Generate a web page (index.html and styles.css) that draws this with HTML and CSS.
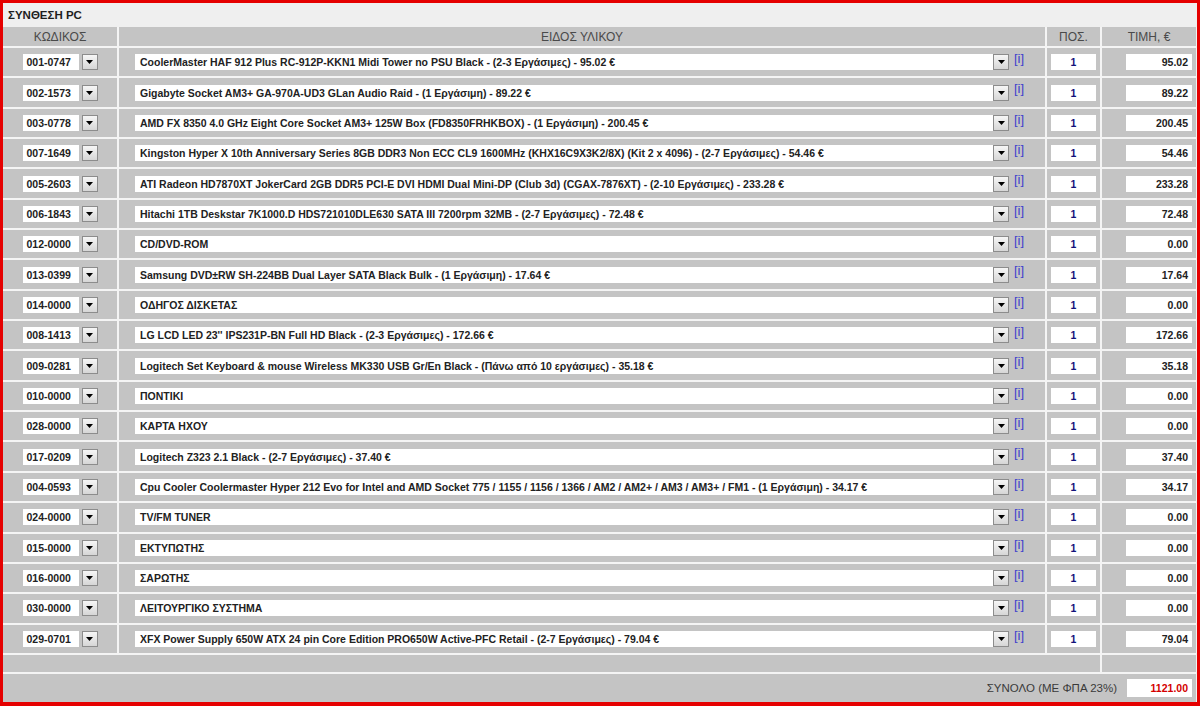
FILE: index.html
```html
<!DOCTYPE html>
<html lang="el">
<head>
    <meta charset="UTF-8">
    <meta name="viewport" content="width=device-width, initial-scale=1.0">
    <title>Σύνθεση PC</title>
    <link rel="stylesheet" href="styles.css">
</head>
<body>
    <div class="page">
        <div class="title">ΣΥΝΘΕΣΗ PC</div>
        <div class="parts" id="parts">
            <div class="head">ΚΩΔΙΚΟΣ</div>
            <div class="head">ΕΙΔΟΣ ΥΛΙΚΟΥ</div>
            <div class="head">ΠΟΣ.</div>
            <div class="head">ΤΙΜΗ, €</div>
        </div>
    </div>

    <script>
        const parts = [
            ["001-0747", "CoolerMaster HAF 912 Plus RC-912P-KKN1 Midi Tower no PSU Black - (2-3 Εργάσιμες) - 95.02 €", "95.02"],
            ["002-1573", "Gigabyte Socket AM3+ GA-970A-UD3 GLan Audio Raid - (1 Εργάσιμη) - 89.22 €", "89.22"],
            ["003-0778", "AMD FX 8350 4.0 GHz Eight Core Socket AM3+ 125W Box (FD8350FRHKBOX) - (1 Εργάσιμη) - 200.45 €", "200.45"],
            ["007-1649", "Kingston Hyper X 10th Anniversary Series 8GB DDR3 Non ECC CL9 1600MHz (KHX16C9X3K2/8X) (Kit 2 x 4096) - (2-7 Εργάσιμες) - 54.46 €", "54.46"],
            ["005-2603", "ATI Radeon HD7870XT JokerCard 2GB DDR5 PCI-E DVI HDMI Dual Mini-DP (Club 3d) (CGAX-7876XT) - (2-10 Εργάσιμες) - 233.28 €", "233.28"],
            ["006-1843", "Hitachi 1TB Deskstar 7K1000.D HDS721010DLE630 SATA III 7200rpm 32MB - (2-7 Εργάσιμες) - 72.48 €", "72.48"],
            ["012-0000", "CD/DVD-ROM", "0.00"],
            ["013-0399", "Samsung DVD±RW SH-224BB Dual Layer SATA Black Bulk - (1 Εργάσιμη) - 17.64 €", "17.64"],
            ["014-0000", "ΟΔΗΓΟΣ ΔΙΣΚΕΤΑΣ", "0.00"],
            ["008-1413", "LG LCD LED 23'' IPS231P-BN Full HD Black - (2-3 Εργάσιμες) - 172.66 €", "172.66"],
            ["009-0281", "Logitech Set Keyboard & mouse Wireless MK330 USB Gr/En Black - (Πάνω από 10 εργάσιμες) - 35.18 €", "35.18"],
            ["010-0000", "ΠΟΝΤΙΚΙ", "0.00"],
            ["028-0000", "ΚΑΡΤΑ ΗΧΟΥ", "0.00"],
            ["017-0209", "Logitech Z323 2.1 Black - (2-7 Εργάσιμες) - 37.40 €", "37.40"],
            ["004-0593", "Cpu Cooler Coolermaster Hyper 212 Evo for Intel and AMD Socket 775 / 1155 / 1156 / 1366 / AM2 / AM2+ / AM3 / AM3+ / FM1 - (1 Εργάσιμη) - 34.17 €", "34.17"],
            ["024-0000", "TV/FM TUNER", "0.00"],
            ["015-0000", "ΕΚΤΥΠΩΤΗΣ", "0.00"],
            ["016-0000", "ΣΑΡΩΤΗΣ", "0.00"],
            ["030-0000", "ΛΕΙΤΟΥΡΓΙΚΟ ΣΥΣΤΗΜΑ", "0.00"],
            ["029-0701", "XFX Power Supply 650W ATX 24 pin Core Edition PRO650W Active-PFC Retail - (2-7 Εργάσιμες) - 79.04 €", "79.04"]
        ];

        const arrow = '<span class="drop"><svg width="7" height="4" viewBox="0 0 7 4"><polygon points="0,0 7,0 3.5,4" fill="#000"/></svg></span>';

        function escapeHtml(s) {
            return s.replace(/&/g, "&amp;").replace(/</g, "&lt;");
        }

        function buildTable() {
            const grid = document.getElementById("parts");
            let html = "";

            parts.forEach(([code, name, price]) => {
                html += '<div class="cell code-cell"><span class="box code-box">' + code + '</span>' + arrow + '</div>';
                html += '<div class="cell name-cell"><span class="box name-box">' + escapeHtml(name) + '</span>' + arrow + '<a class="info" href="#">[i]</a></div>';
                html += '<div class="cell"><span class="box qty-box">1</span></div>';
                html += '<div class="cell price-cell"><span class="box price-box">' + price + '</span></div>';
            });

            html += '<div class="blank wide"></div><div class="blank"></div>';

            const sum = parts.reduce((acc, p) => acc + parseFloat(p[2]), 0);
            html += '<div class="total">ΣΥΝΟΛΟ (ΜΕ ΦΠΑ 23%)<span class="box total-box">' + sum.toFixed(2) + '</span></div>';

            grid.insertAdjacentHTML("beforeend", html);
        }

        buildTable();
    </script>
</body>
</html>
```

FILE: styles.css
```css
* {
    margin: 0;
    padding: 0;
    box-sizing: border-box;
}
body {
    font-family: "Liberation Sans", Arial, sans-serif;
    background-color: #ffffff;
}
.page {
    width: 1200px;
    height: 706px;
    border: 3px solid #e50000;
    border-bottom-width: 4px;
    background-color: #f2f2f2;
}
.title {
    height: 24px;
    padding-left: 5px;
    display: flex;
    align-items: center;
    font-size: 11.5px;
    font-weight: bold;
    color: #1e1e1e;
    background-color: #efefef;
}
.parts {
    display: grid;
    grid-template-columns: 114px 926px 53px 94px;
    grid-template-rows: 19px repeat(20, 28.35px) 17px 28px;
    gap: 2px;
    background-color: #f4f4f4;
    width: 1193px;
}
.head {
    background-color: #c4c4c4;
    color: #4a4a4a;
    font-size: 12px;
    display: flex;
    align-items: center;
    justify-content: center;
}
.cell {
    background-color: #c4c4c4;
    display: flex;
    align-items: center;
    justify-content: center;
}
.box {
    display: inline-block;
    height: 16px;
    line-height: 16px;
    background-color: #ffffff;
    font-size: 10.5px;
    font-weight: bold;
    color: #222222;
    white-space: nowrap;
    overflow: hidden;
}
.code-box {
    width: 56px;
    padding-left: 4px;
    margin-right: 3px;
}
.name-cell {
    justify-content: flex-start;
    padding-left: 16px;
}
.name-box {
    width: 858px;
    padding-left: 5px;
}
.drop {
    width: 16px;
    height: 16px;
    border: 1px solid #8c8c8c;
    background: linear-gradient(#f6f6f6, #d6d6d6);
    display: flex;
    align-items: center;
    justify-content: center;
}
.info {
    align-self: flex-start;
    margin-top: 3px;
    margin-left: 5px;
    font-size: 13px;
    color: #4040cc;
    text-decoration: none;
}
.qty-box {
    width: 45px;
    text-align: center;
    color: #12127a;
}
.price-cell {
    justify-content: flex-end;
    padding-right: 4px;
}
.price-box {
    width: 66px;
    text-align: right;
    padding-right: 4px;
}
.blank {
    background-color: #c4c4c4;
}
.blank.wide {
    grid-column: 1 / 4;
}
.total {
    grid-column: 1 / 5;
    background-color: #c4c4c4;
    display: flex;
    align-items: center;
    justify-content: flex-end;
    gap: 10px;
    padding-right: 4px;
    font-size: 11.5px;
    color: #3a3a3a;
}
.total-box {
    width: 65px;
    height: 18px;
    line-height: 18px;
    text-align: right;
    padding-right: 4px;
    color: #d40000;
}
```
